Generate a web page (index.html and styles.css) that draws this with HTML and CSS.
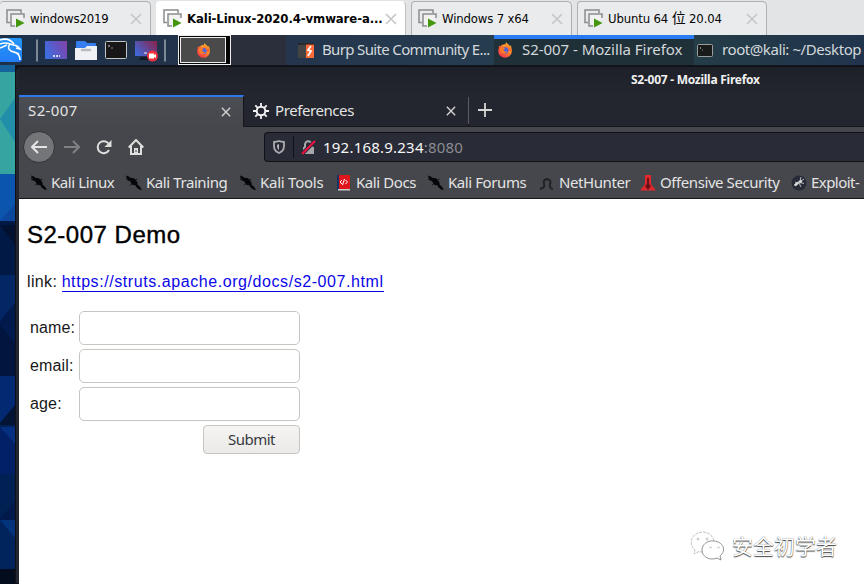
FILE: index.html
```
<!DOCTYPE html>
<html lang="en">
<head>
<meta charset="utf-8">
<title>S2-007 - Mozilla Firefox</title>
<link rel="stylesheet" href="styles.css">
</head>
<body>
<svg class="defs" width="0" height="0">
  <defs>
    <linearGradient id="purple" x1="0" x2="1" y1=".7" y2=".3"><stop stop-color="#3b6fe0"/><stop offset="1" stop-color="#7d45ad"/></linearGradient>
    <linearGradient id="wine" x1="0" x2="1" y1=".8" y2=".2"><stop stop-color="#4069dc"/><stop offset="1" stop-color="#852754"/></linearGradient>
    <linearGradient id="kali" x1="0" x2="0" y1="0" y2="1"><stop stop-color="#2396f7"/><stop offset="1" stop-color="#247cf5"/></linearGradient>
    <linearGradient id="flame" x1=".9" x2=".2" y1="0" y2="1"><stop stop-color="#ffd83d"/><stop offset=".45" stop-color="#ff8428"/><stop offset="1" stop-color="#f02b50"/></linearGradient>
    <symbol id="vm" viewBox="0 0 19 19">
      <path d="M4 13.500H1V1h14v3" fill="none" stroke="#8b8c8d" stroke-width="1.500"/>
      <path d="M9 17H5V5h13v4" fill="#f1f1f2" stroke="#8b8c8d" stroke-width="1.500"/>
      <path d="M10 9.500v9l8.500-4.500z" fill="#44970d"/>
    </symbol>
    <symbol id="cross" viewBox="0 0 12 12"><path d="M1 1l10 10M11 1L1 11" fill="none" stroke="currentColor" stroke-width="1.700"/></symbol>
    <symbol id="fox" viewBox="0 0 16 16">
      <circle cx="8" cy="9" r="6.800" fill="url(#flame)"/>
      <path d="M1.500 9L2 3.500 4 5l1-2 1.500 2.500L8 4l1-4c1 2 3 2 3.500 4L14 3.500 15 9z" fill="url(#flame)"/>
      <circle cx="8" cy="8.500" r="3.300" fill="#4c64d7"/>
      <path d="M2 7l3-2.500 3 2-1.500 1.500c1 2 3 2 4 1-1 3-5 3.500-7 1z" fill="#ff7a28"/>
    </symbol>
    <symbol id="dragon" viewBox="0 0 17 17">
      <path d="M0 .5l3 1 1.500 1.500 4 .5 3.500 4 .5 3 2 1.500 2.500 4-3-.5-3-2.500-1-2-3-.5-3-4-2-1.500z" fill="#050607"/>
      <path d="M0 1v3l3 2M6 9l-1.500 2M10 5l2-.5" stroke="#090a0b" fill="none"/>
    </symbol>
  </defs>
</svg>

<nav class="vm-tabs">
  <div class="vm-tab vm-first"><svg class="vm-icon"><use href="#vm"/></svg><span class="vm-label">windows2019</span><svg class="vm-close"><use href="#cross"/></svg></div>
  <div class="vm-tab vm-active"><svg class="vm-icon"><use href="#vm"/></svg><span class="vm-label">Kali-Linux-2020.4-vmware-a...</span><svg class="vm-close"><use href="#cross"/></svg></div>
  <div class="vm-tab vm-third"><svg class="vm-icon"><use href="#vm"/></svg><span class="vm-label">Windows 7 x64</span><svg class="vm-close"><use href="#cross"/></svg></div>
  <div class="vm-tab vm-fourth"><svg class="vm-icon"><use href="#vm"/></svg><span class="vm-label">Ubuntu 64 <span class="cjk">位</span> 20.04</span><svg class="vm-close"><use href="#cross"/></svg></div>
</nav>

<div class="taskbar">
  <div class="launchers">
    <svg width="170" height="30" viewBox="0 0 170 30">
      <path d="M0 3h20q2 0 2 2v19q0 3-3 3H0z" fill="url(#kali)"/>
      <path d="M0 5c6-2 11 0 14 4M0 9c5-2 9-1 13 1M0 13l7-3M10 9c-3 4-1 7 4 8 4 1 6 4 6 8M13 10c3 0 5 1 7 4l-4-1M14 17l5 2" fill="none" stroke="#fff" stroke-width="1.500"/>
      <path d="M37 4.500v22M165 4.500v22" stroke="#7c8896" stroke-width="2"/>
      <path d="M45 6h22v18H45z" fill="url(#purple)"/>
      <path d="M53 21h2m1 0h2m1 0h1" stroke="#fff" stroke-width="1.500"/>
      <path d="M76 13V7q0-1 1-1h8l2 2h8q1 0 1 1v5z" fill="#367df0"/>
      <path d="M75 13h10l2-2h10v14H75z" fill="#f0f1f4"/>
      <path d="M82 15h8" stroke="#b9babd" stroke-width="2.500" stroke-linecap="round"/>
      <rect x="105.500" y="6.500" width="21" height="17" rx="1" fill="#171717" stroke="#c4c4c2"/>
      <path d="M108 10l2 1-2 1M111 13h2" stroke="#aaa" fill="none" stroke-width=".8"/>
      <path d="M135 6h22v15h-22z" fill="url(#wine)"/>
      <path d="M141 22h10l2 3h-14z" fill="#121a25"/>
      <path d="M144 18h3" stroke="#fff"/>
      <circle cx="152.500" cy="21" r="5.500" fill="#ef3039"/>
      <path d="M149 18.500h5v1.500l2-1v4l-2-1v1.500h-5z" fill="#fff"/>
    </svg>
  </div>
  <div class="pager"><div class="pager-window"><svg width="15" height="15"><use href="#fox"/></svg></div></div>
  <div class="task-gap"></div>
  <div class="task task-burp">
    <svg width="16" height="15" viewBox="0 0 16 15"><path d="M0 1l3-1h10l3 1v14H0z" fill="#444"/><path d="M8 1h8v14H8z" fill="#ff6a39"/><path d="M13 3l-3 4 3 1-3 5" stroke="#fff" stroke-width="1.700" fill="none"/><path d="M0 1h16" stroke="#111"/></svg>
    <span class="task-label t-burp">Burp Suite Community E...</span>
  </div>
  <div class="task task-fox"><svg width="16" height="16"><use href="#fox"/></svg><span class="task-label t-fox">S2-007 - Mozilla Firefox</span></div>
  <div class="task task-term">
    <svg width="16" height="13" viewBox="0 0 16 13"><rect x=".5" y=".5" width="15" height="12" rx="1" fill="#191a1a" stroke="#9b9d9c"/><path d="M3 3l1 1-1 1M5 6h1" stroke="#aaa" fill="none" stroke-width=".8"/></svg>
    <span class="task-label t-root">root@kali: ~/Desktop</span>
  </div>
</div>

<div class="desktop">
  <svg class="wallpaper" width="15" height="519" viewBox="0 0 16 519" preserveAspectRatio="none">
    <path d="M0 0h16v519H0z" fill="#012155"/>
    <path d="M0 0h16v109H0z" fill="#36a4a0"/><path d="M0 0h16v7H0z" fill="#16629a"/>
    <path d="M16 33v44L0 54z" fill="#218fa9"/>
    <path d="M0 109h16v47H0z" fill="#0b55ae"/><path d="M0 156l16-17v17z" fill="#0b479d"/>
    <path d="M0 156h16v54H0z" fill="#011a45"/><path d="M0 160l16 20v-20H0z" fill="#031130"/>
    <path d="M0 210h16v50H0z" fill="#032664"/><path d="M0 256l16-18v22H0z" fill="#02194b"/>
    <path d="M0 260h16v51H0z" fill="#01153e"/><path d="M0 260l16 18v-18z" fill="#021b4e"/>
    <path d="M0 311h16v49H0z" fill="#022972"/><path d="M0 358l16-18v20H0z" fill="#031435"/>
    <path d="M0 362h16v47H0z" fill="#012066"/><path d="M0 362l16 17v-17z" fill="#052f80"/>
    <path d="M0 454l16-18v19H0z" fill="#011a4b"/>
    <path d="M0 455h16v49H0z" fill="#02245d"/><path d="M0 455l16 18v-18z" fill="#01347c"/>
    <path d="M0 504h16v15H0z" fill="#030c1d"/>
  </svg>
  <div class="window">
    <header class="titlebar"><span class="t-title">S2-007 - Mozilla Firefox</span></header>
    <div class="browser">
      <div class="tabs">
        <div class="tab tab-active"><span class="ui t-tab1">S2-007</span><svg class="tab-close"><use href="#cross"/></svg></div>
        <div class="tab tab-prefs">
          <svg width="16" height="16" viewBox="0 0 16 16" fill="none" stroke="#f2f2f3"><circle cx="8" cy="8" r="4.300" stroke-width="2"/><path d="M8 0v3.500M8 12.500V16M0 8h3.500M12.500 8H16M2.300 2.300l2.500 2.500M11.200 11.200l2.500 2.500M13.700 2.300l-2.500 2.500M4.800 11.200l-2.500 2.500" stroke-width="1.800"/></svg>
          <span class="ui t-prefs">Preferences</span><svg class="tab-close"><use href="#cross"/></svg>
        </div>
        <div class="new-tab"><svg width="14" height="14" viewBox="0 0 14 14"><path d="M7 0v14M0 7h14" stroke="#d6d6d4" stroke-width="1.800"/></svg></div>
      </div>
      <div class="toolbar">
        <div class="nav-buttons">
          <div class="back"><svg width="16" height="14" viewBox="0 0 16 14"><path d="M16 7H1M7 1L1 7l6 6" fill="none" stroke="#e5e5e4" stroke-width="2"/></svg></div>
          <svg class="forward" width="16" height="14" viewBox="0 0 16 14"><path d="M0 7h15M9 1l6 6-6 6" fill="none" stroke="#7f8084" stroke-width="2"/></svg>
          <svg class="reload" width="16" height="15" viewBox="0 0 16 15"><path d="M12.500 3.500A6 6 0 1 0 13 10" fill="none" stroke="#dededc" stroke-width="2"/><path d="M15.500 0v7H8.500z" fill="#dededc"/></svg>
          <svg class="home" width="16" height="16" viewBox="0 0 16 16"><path d="M0.700 8.500L8 1l7.300 7.500M3 7v8h10V7" fill="none" stroke="#dededc" stroke-width="2"/><path d="M6 15V9h4v6z" fill="#dededc"/><path d="M7.500 11h1v2h-1z" fill="#45474d"/></svg>
        </div>
        <div class="urlbar">
          <svg class="shield" width="12" height="14" viewBox="0 0 12 14"><path d="M1 2q3-.3 5-1 2 .7 5 1v4q0 5-5 7-5-2-5-7z" fill="none" stroke="#aaabad" stroke-width="1.800"/><path d="M6 4v6q-2-1-2-5z" fill="#b8b9bc"/></svg>
          <div class="lock"><svg width="15" height="15" viewBox="0 0 15 15"><path d="M4 7V4.500a3 3 0 0 1 6.500 0V7" fill="none" stroke="#a6a7aa" stroke-width="2"/><path d="M2 7h11v7H2z" fill="#a6a7aa"/><path d="M1 14L14 1" stroke="#292b36" stroke-width="4"/><path d="M1 14L14 1" stroke="#fb0f40" stroke-width="2"/></svg></div>
          <span class="ui address">192.168.9.234<span class="port">:8080</span></span>
        </div>
      </div>
      <div class="bookmarks">
        <div class="mark m1"><svg><use href="#dragon"/></svg><span class="ui">Kali Linux</span></div>
        <div class="mark m2"><svg><use href="#dragon"/></svg><span class="ui">Kali Training</span></div>
        <div class="mark m3"><svg><use href="#dragon"/></svg><span class="ui">Kali Tools</span></div>
        <div class="mark m4"><svg viewBox="0 0 16 16"><path d="M1 0h12q1 0 1 1v14H1z" fill="#df171d"/><path d="M1 0h2v15H1z" fill="#143464"/><path d="M2 14h12v1.500H2z" fill="#cacbcc"/><path d="M6 5L4 7l2 2M8.500 4l-2 6M9.500 5l2 2-2 2" fill="none" stroke="#fff"/></svg><span class="ui">Kali Docs</span></div>
        <div class="mark m5"><svg><use href="#dragon"/></svg><span class="ui">Kali Forums</span></div>
        <div class="mark m6"><svg viewBox="0 0 16 16"><path d="M1 14c4-1 5-3 4-5-1-3 1-5 3-5 4 1 4 3 3 5-1 3 1 5 3 5" fill="none" stroke="#202226" stroke-width="2"/></svg><span class="ui">NetHunter</span></div>
        <div class="mark m7"><svg viewBox="0 0 16 16"><path d="M5 0h6v9l5 6.500H0L5 9z" fill="#df282d"/><path d="M7 3h2v6l2 2-3 4-3-4 2-2z" fill="#6c1017"/></svg><span class="ui">Offensive Security</span></div>
        <div class="mark m8"><svg viewBox="0 0 16 16"><circle cx="8" cy="8" r="7.500" fill="#272b37"/><path d="M3 10l3-3 2 1-3 3zM7 7l3-2 1 2-2 1z" fill="#ddd" stroke="#ddd" stroke-width=".5"/><path d="M4 7l2 1M8 8l2 4M9 6l1-4M10 6l3-2M9 7.500l4 1" fill="none" stroke="#ddd" stroke-width=".8"/></svg><span class="ui">Exploit-</span></div>
      </div>
      <main class="page">
        <h1>S2-007 Demo</h1>
        <p class="link-line"><span class="t-link">link:</span> <a href="#">https://struts.apache.org/docs/s2-007.html</a></p>
        <form class="form" onsubmit="return false">
          <label for="name">name:</label><input id="name" type="text">
          <label for="email">email:</label><input id="email" type="text">
          <label for="age">age:</label><input id="age" type="text">
          <button type="submit">Submit</button>
        </form>
      </main>
    </div>
  </div>
</div>

<div class="watermark">
  <svg width="36" height="32" viewBox="0 0 36 32" fill="none" stroke="#b2b2b2" stroke-width=".8">
    <path d="M13 21q-3 0-4-.5L4 23l1-4C-2 13 1 2 12 1c7 0 11 4 12 9" stroke-dasharray="3 1"/>
    <path d="M24 10c-7-1-12 4-12 9 0 7 8 11 15 8l4 2-1-4c7-6 3-14-6-15z" stroke="#777"/>
    <circle cx="8" cy="8" r="1"/><circle cx="17" cy="8" r="1"/><path d="M19 17l1.500-1 1.500 1M27 17l1.500-1 1.500 1"/>
  </svg>
  <span>安全初学者</span>
</div>
</body>
</html>
```
FILE: styles.css
```
* { box-sizing: border-box; }
html, body { margin: 0; width: 864px; height: 584px; overflow: hidden; }
body { background: #e3e4e6; font-family: "Noto Sans", sans-serif; }
svg { display: block; flex: none; }
span { white-space: nowrap; }
.defs { position: absolute; }

.vm-tabs { display: flex; gap: 5px; height: 35px; padding-top: 1px; background: #e3e4e6; }
.vm-tab { display: flex; align-items: center; height: 34px; padding: 0 8px 0 6px; border: 1px solid #adafb1; border-bottom: 0; border-radius: 4px 5px 0 0; background: #eaebed; }
.vm-first { width: 151px; border-left: 0; }
.vm-active { width: 250px; background: #fff; border-color: #fff #bdbfc0 #fff #fff; }
.vm-third { width: 161px; }
.vm-fourth { width: 190px; }
.vm-icon { width: 19px; height: 19px; }
.vm-label { flex: 1; margin-left: 5px; font: 13px/18px "DejaVu Sans Condensed", "DejaVu Sans", sans-serif; color: #050505; letter-spacing: -.15px; }
.vm-active .vm-label { font-weight: bold; letter-spacing: -.1px; }
.vm-close { width: 12px; height: 12px; color: #c6c7c8; }
.cjk { font-family: "Noto Sans CJK SC", sans-serif; font-size: 14px; line-height: 14px; }

.taskbar { display: flex; height: 30px; background: linear-gradient(90deg, #1d3149, #24344c 30%, #263d50 56%, #243d47 80%, #21344d); color: #d4d8db; }
.launchers { width: 178px; }
.pager { width: 53px; padding: 1px 4px 1px 1px; background: #050505; border: 1px solid #eee; }
.pager-window { display: flex; align-items: center; justify-content: center; height: 26px; background: #4a4a4a; border: 1px solid #eee; }
.task-gap { width: 55px; background: #2b2e3b; }
.task { display: flex; align-items: center; overflow: hidden; }
.task-label { font-size: 15px; line-height: 20px; position: relative; top: -1px; }
.t-burp { letter-spacing: -.65px; }
.t-fox { letter-spacing: -.04px; }
.t-root { letter-spacing: -.42px; }
.task-burp { width: 208px; padding-left: 12px; gap: 8px; }
.task-fox { width: 200px; padding-left: 3px; gap: 9px; background: #203039; border-top: 4px solid #287bf4; padding-bottom: 4px; }
.task-term { flex: 1; padding-left: 3px; gap: 9px; }

.desktop { display: flex; height: 519px; background: #12151c; }
.wallpaper { width: 15px; }
.window { width: 849px; margin-top: 1px; border: 1px solid #101116; border-right: 0; border-radius: 6px 0 0; background: #23262f; padding-left: 3px; }
.titlebar { height: 28px; padding-left: 612px; color: #f1f1f1; font-size: 12px; line-height: 25px; font-weight: bold; letter-spacing: -.26px; background: linear-gradient(#1d2027, #23262f); }
.browser { display: flex; flex-direction: column; width: 845px; height: 489px; }
.ui { font-size: 15px; line-height: 20px; color: #e4e4e3; letter-spacing: -.42px; padding-bottom: 2px; }
.tabs { display: flex; height: 32px; background: #23262f; }
.tab { display: flex; align-items: center; }
.tab-active { width: 225px; justify-content: space-between; padding: 0 12px 0 9px; border-top: 2px solid #2c78ef; border-right: 1px solid #14161b; background: #494b52; background: linear-gradient(#4b4d54, #45474d); }
.t-tab1 { letter-spacing: .4px; padding-bottom: 4px; }
.tab-close { width: 10px; height: 10px; color: #d0d0cf; }
.tab-prefs { width: 225px; padding: 0 12px 0 9px; border-bottom: 1px solid #15171b; border-right: 1px solid #5a5c62; border-image: linear-gradient(#23262f 10%, #5a5c62 10% 90%, #15171b 90%) 1; }
.tab-prefs .ui { flex: 1; margin-left: 6px; }
.new-tab { flex: 1; padding: 8px 0 0 9px; border-bottom: 1px solid #15171b; }
.toolbar { display: flex; height: 40px; padding-top: 4px; background: #45474d; }
.nav-buttons { display: flex; align-items: center; width: 245px; height: 32px; padding-left: 4px; }
.back { display: flex; align-items: center; justify-content: center; width: 32px; height: 32px; border: 1px solid #303238; border-radius: 50%; background: #737579; }
.forward { margin-left: 9px; }
.reload { margin-left: 16px; }
.home { margin-left: 16px; }
.urlbar { display: flex; align-items: center; flex: 1; height: 30px; margin-top: 1px; padding-left: 8px; border: 1px solid #101217; border-right: 0; border-radius: 4px 0 0 4px; background: #292b36; }
.lock { display: flex; align-items: center; height: 22px; margin: 0 7px 0 8px; padding-left: 7px; border-left: 1px solid #101218; }
.address { color: #f7f7f7; letter-spacing: .22px; padding: 0; }
.port { color: #8c8d92; }
.bookmarks { display: flex; height: 32px; padding-left: 12px; background: #45474d; border-bottom: 1px solid #15171b; overflow: hidden; }
.mark { display: flex; align-items: center; flex: none; gap: 4px; }
.mark svg { width: 16px; height: 16px; }
.m1 { width: 95px; } .m2 { width: 114px; } .m3 { width: 96px; } .m4 { width: 92px; }
.m5 { width: 111px; } .m6 { width: 101px; } .m7 { width: 151px; } .m8 { width: 73px; }
.m3 .ui { letter-spacing: -.25px; }
.m8 .ui { letter-spacing: -.55px; }

.page { flex: 1; padding: 20px 8px; background: #fff; color: #000; font-family: "Liberation Sans", sans-serif; }
h1 { margin: 0; font-size: 24px; line-height: 32px; font-weight: normal; letter-spacing: .5px; -webkit-text-stroke: .4px #000; }
.link-line { margin: 19px 0 0; font-size: 16px; line-height: 24px; color: #181818; }
.t-link { letter-spacing: .35px; }
.link-line a { display: inline-block; color: #0b06e8; text-decoration: none; line-height: 19px; border-bottom: 1px solid #0b06e8; letter-spacing: .57px; }
.form { display: grid; grid-template-columns: 46px 221px; gap: 4px 3px; width: 270px; margin: 17px 0 0 3px; font-size: 16px; letter-spacing: .15px; align-items: center; color: #181818; }
input { width: 221px; height: 34px; border: 1px solid #c8c5c1; border-radius: 5px; background: #fff; }
button { grid-column: 2; justify-self: end; width: 97px; height: 29px; padding: 0 0 2px; border: 1px solid #c8c5c1; border-radius: 4px; background: linear-gradient(#f5f4f3, #ebeae8); color: #36393c; font: 15px/20px "Noto Sans", sans-serif; letter-spacing: -.5px; }

.watermark { position: absolute; left: 690px; top: 530px; display: flex; align-items: center; gap: 6px; height: 34px; }
.watermark span { padding-bottom: 4px; color: #fff; font: 21px/30px "Noto Sans CJK SC", sans-serif; text-shadow: 0 1px 1px #444, 0 0 1px #777; }
```
